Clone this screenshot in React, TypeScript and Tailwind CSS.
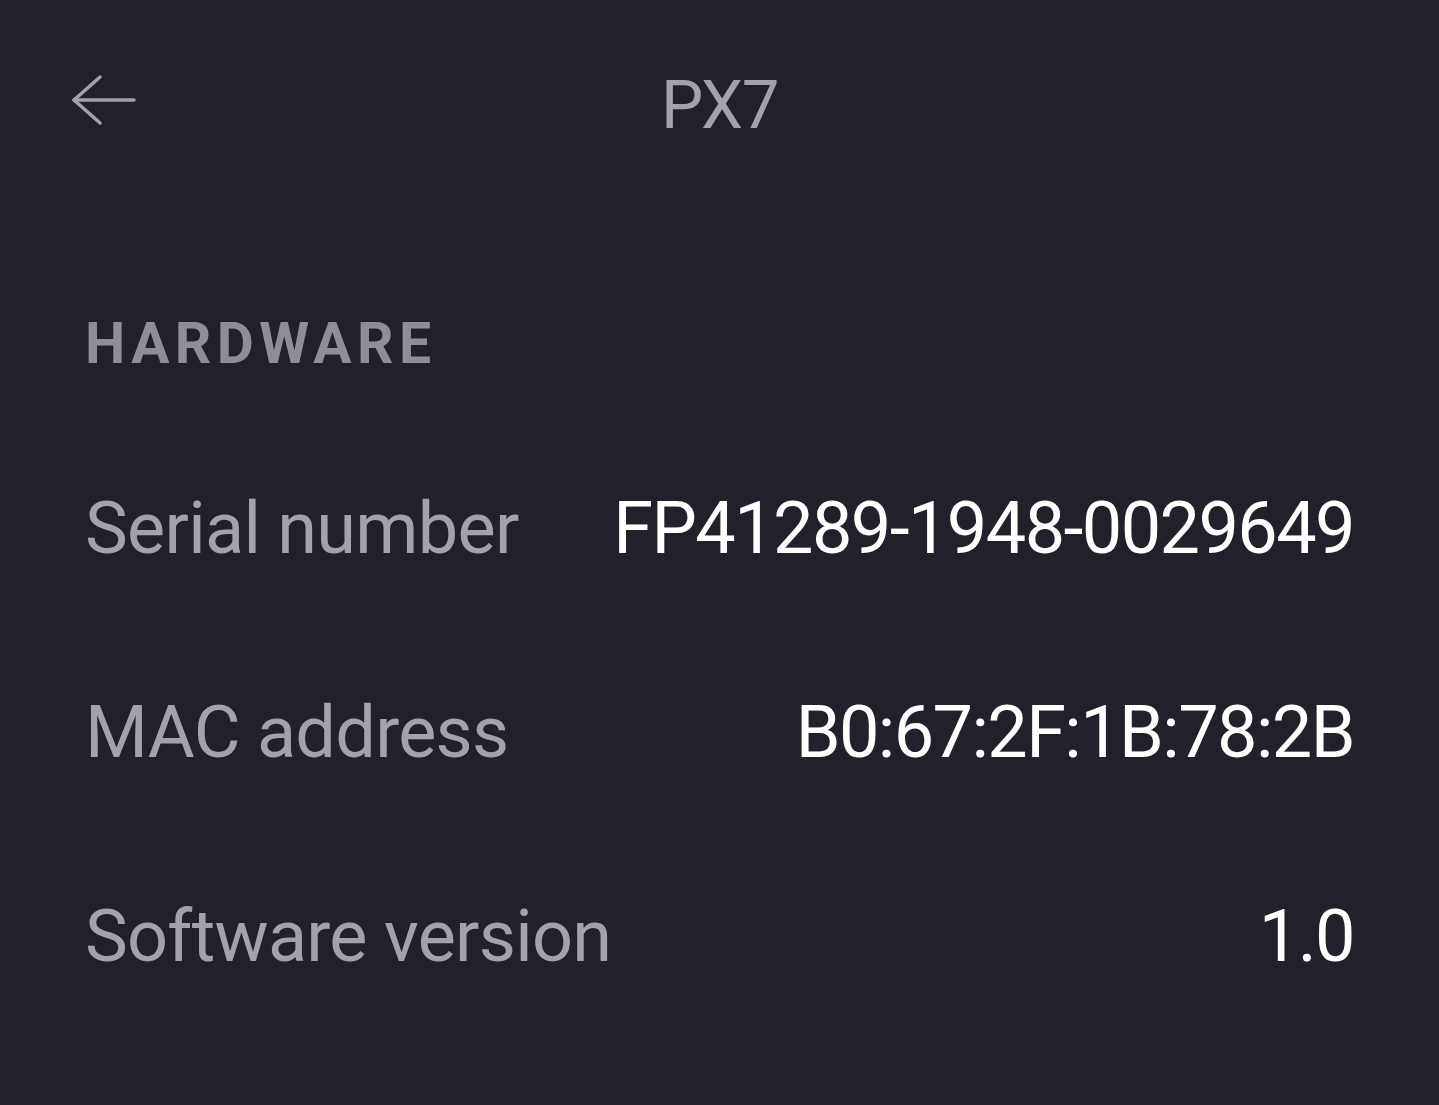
const rows = [
    { label: 'Serial number', value: 'FP41289-1948-0029649' },
    { label: 'MAC address', value: 'B0:67:2F:1B:78:2B' },
    { label: 'Software version', value: '1.0' },
];

function BackArrow() {
    return (
        <svg width="66" height="52" viewBox="0 0 66 52" fill="none" stroke="currentColor" strokeWidth="3.5" strokeLinecap="round" strokeLinejoin="round">
            <path d="M3 26 H63" />
            <path d="M29 3 L3 26 L29 49" />
        </svg>
    );
}

export default function App() {
    return (
        <div className="min-h-screen w-full bg-[#22212b] font-['Roboto',sans-serif] text-white">
            <header className="h-[206px] grid grid-cols-[1fr_auto_1fr] items-center px-[71px]">
                <button className="justify-self-start text-[#a3a2ab] -mt-[6px]">
                    <BackArrow />
                </button>
                <h1 className="text-[67px] leading-none text-[#a3a2ab] font-normal tracking-[-0.02em] mt-[4px]">PX7</h1>
                <div />
            </header>

            <section className="px-[85px]">
                <h2 className="mt-[109px] h-[112px] text-[57px] leading-none font-bold tracking-[0.095em] text-[#8e8d98]">
                    HARDWARE
                </h2>
                {rows.map((row) => (
                    <div key={row.label} className="h-[204px] flex items-center justify-between gap-8 text-[72px] leading-none whitespace-nowrap">
                        <span className="text-[#a3a2ab] tracking-[-0.01em]">{row.label}</span>
                        <span className="text-white tracking-[-0.022em]">{row.value}</span>
                    </div>
                ))}
            </section>
        </div>
    );
}
